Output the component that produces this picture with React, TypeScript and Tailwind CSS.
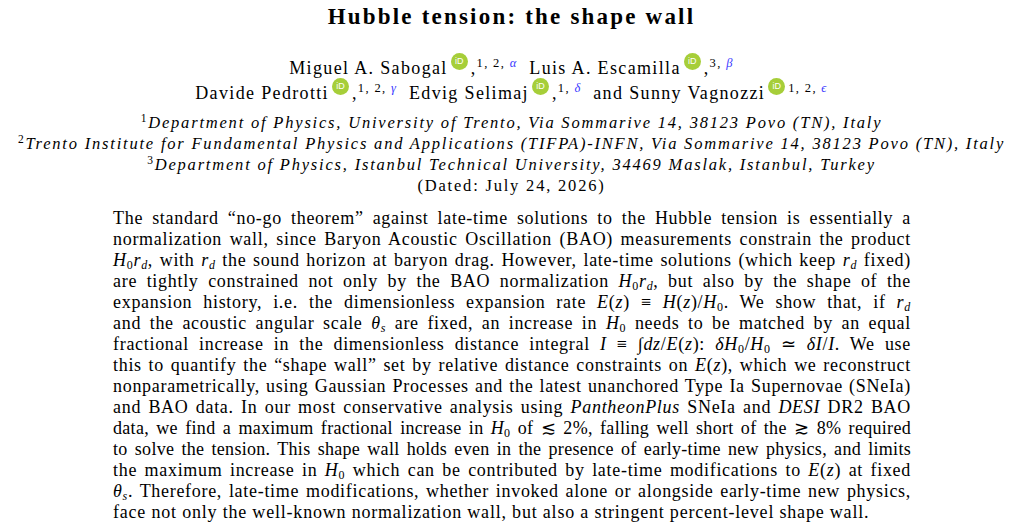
import React from "react";

const Orcid = () => (
  <span className="relative -top-[4px] inline-block w-[17px] h-[17px] rounded-full bg-[#a6ce39] align-baseline overflow-hidden text-white text-[9px] leading-[17px] text-center tracking-normal font-['Liberation_Sans',sans-serif] mx-[3px]">
    iD
  </span>
);

const Sup = ({ nums, greek }: { nums: string; greek: string }) => (
  <sup className="text-[12.5px] top-[-0.6em]">
    {nums}
    <i className="text-[#3a3aff]">{greek}</i>
  </sup>
);

const V = ({ children }: { children: React.ReactNode }) => <i>{children}</i>;
const H0 = () => (
  <>
    <i>H</i>
    <sub className="text-[12px]">0</sub>
  </>
);
const Rd = () => (
  <>
    <i>r</i>
    <sub className="text-[12px]">
      <i>d</i>
    </sub>
  </>
);
const Ths = () => (
  <>
    <i>θ</i>
    <sub className="text-[12px]">
      <i>s</i>
    </sub>
  </>
);

const lines: { t: React.ReactNode; tight?: boolean }[] = [
  { t: <>The standard “no-go theorem” against late-time solutions to the Hubble tension is essentially a</> },
  { t: <>normalization wall, since Baryon Acoustic Oscillation (BAO) measurements constrain the product</> },
  {
    t: (
      <>
        <H0 />
        <Rd />, with <Rd /> the sound horizon at baryon drag. However, late-time solutions (which keep <Rd /> fixed)
      </>
    ),
  },
  {
    t: (
      <>
        are tightly constrained not only by the BAO normalization <H0 />
        <Rd />, but also by the shape of the
      </>
    ),
  },
  {
    t: (
      <>
        expansion history, i.e. the dimensionless expansion rate <V>E</V>(<V>z</V>) ≡ <V>H</V>(<V>z</V>)/<H0 />. We show that, if <Rd />
      </>
    ),
  },
  {
    t: (
      <>
        and the acoustic angular scale <Ths /> are fixed, an increase in <H0 /> needs to be matched by an equal
      </>
    ),
  },
  {
    t: (
      <>
        fractional increase in the dimensionless distance integral <V>I</V> ≡ ∫<V>dz</V>/<V>E</V>(<V>z</V>): <V>δ</V>
        <H0 />/<H0 /> ≃ <V>δI</V>/<V>I</V>. We use
      </>
    ),
  },
  {
    t: (
      <>
        this to quantify the “shape wall” set by relative distance constraints on <V>E</V>(<V>z</V>), which we reconstruct
      </>
    ),
  },
  { t: <>nonparametrically, using Gaussian Processes and the latest unanchored Type Ia Supernovae (SNeIa)</> },
  {
    t: (
      <>
        and BAO data. In our most conservative analysis using <i>PantheonPlus</i> SNeIa and <i>DESI</i> DR2 BAO
      </>
    ),
  },
  {
    t: (
      <>
        data, we find a maximum fractional increase in <H0 /> of ≲ 2%, falling well short of the ≳ 8% required
      </>
    ),
    tight: true,
  },
  { t: <>to solve the tension. This shape wall holds even in the presence of early-time new physics, and limits</>, tight: true },
  {
    t: (
      <>
        the maximum increase in <H0 /> which can be contributed by late-time modifications to <V>E</V>(<V>z</V>) at fixed
      </>
    ),
  },
  {
    t: (
      <>
        <Ths />. Therefore, late-time modifications, whether invoked alone or alongside early-time new physics,
      </>
    ),
  },
];

export default function App() {
  return (
    <div className="w-[1009px] h-[524px] overflow-hidden bg-white text-black font-['Liberation_Serif',serif]">
      <div className="w-[1023px]">
        <div className="text-center text-[23px] font-bold leading-[34px] tracking-[2.2px]">Hubble tension: the shape wall</div>

        <div className="mt-[22px] text-center text-[18px] leading-[25px] tracking-[1.35px]">
          <div>
            Miguel A. Sabogal
            <Orcid />,<Sup nums="1, 2, " greek="α" />&nbsp; Luis A. Escamilla
            <Orcid />,<Sup nums="3, " greek="β" />
          </div>
          <div>
            Davide Pedrotti
            <Orcid />,<Sup nums="1, 2, " greek="γ" />&nbsp; Edvig Selimaj
            <Orcid />,<Sup nums="1, " greek="δ" />&nbsp; and Sunny Vagnozzi
            <Orcid />
            <Sup nums="1, 2, " greek="ϵ" />
          </div>
        </div>

        <div className="mt-[6px] text-center text-[16.5px] leading-[21px] tracking-[1.8px]">
          <div className="italic">
            <sup className="not-italic text-[11.5px]">1</sup>Department of Physics, University of Trento, Via Sommarive 14, 38123 Povo (TN), Italy
          </div>
          <div className="italic">
            <sup className="not-italic text-[11.5px]">2</sup>Trento Institute for Fundamental Physics and Applications (TIFPA)-INFN, Via Sommarive 14, 38123 Povo (TN), Italy
          </div>
          <div className="italic">
            <sup className="not-italic text-[11.5px]">3</sup>Department of Physics, Istanbul Technical University, 34469 Maslak, Istanbul, Turkey
          </div>
          <div>(Dated: July 24, 2026)</div>
        </div>

        <div className="mt-[12px] ml-[113px] w-[798px] text-[18px] leading-[21px]">
          {lines.map((l, i) => (
            <div
              key={i}
              className={
                l.tight
                  ? "whitespace-nowrap text-justify [text-align-last:justify] tracking-[0.3px]"
                  : "whitespace-nowrap text-justify [text-align-last:justify] tracking-[0.7px]"
              }
            >
              {l.t}
            </div>
          ))}
          <div className="tracking-[0.8px]">face not only the well-known normalization wall, but also a stringent percent-level shape wall.</div>
        </div>
      </div>
    </div>
  );
}
